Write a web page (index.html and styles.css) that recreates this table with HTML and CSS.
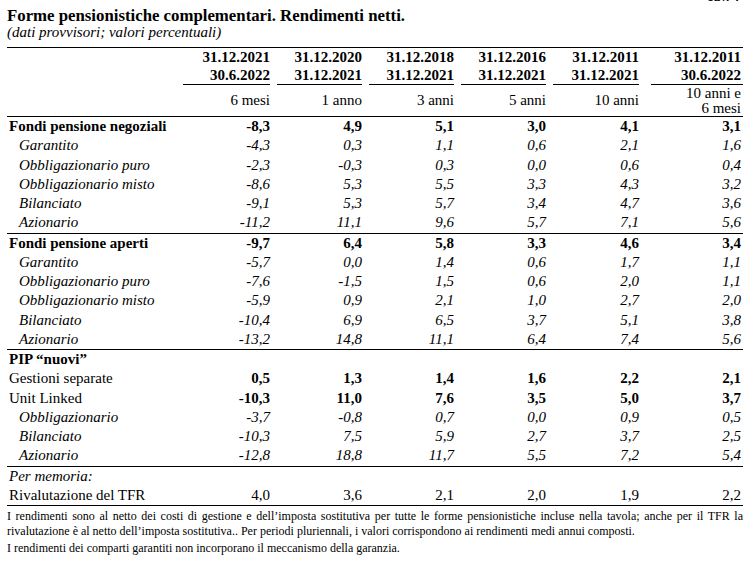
FILE: index.html
```html
<!DOCTYPE html>
<html lang="it">
<head>
<meta charset="utf-8">
<title>Forme pensionistiche complementari</title>
<link rel="stylesheet" href="styles.css">
</head>
<body>
<div class="page">
  <div class="tav">Tav. 4</div>
  <h1 class="title">Forme pensionistiche complementari. Rendimenti netti.</h1>
  <div class="subtitle">(dati provvisori; valori percentuali)</div>

  <div class="table">
    <div class="row dates">
      <div class="lab"></div>
      <div class="c"><span class="ul">31.12.2021<br>30.6.2022</span></div>
      <div class="c"><span class="ul">31.12.2020<br>31.12.2021</span></div>
      <div class="c"><span class="ul">31.12.2018<br>31.12.2021</span></div>
      <div class="c"><span class="ul">31.12.2016<br>31.12.2021</span></div>
      <div class="c"><span class="ul">31.12.2011<br>31.12.2021</span></div>
      <div class="c last"><span class="ul">31.12.2011<br>30.6.2022</span></div>
    </div>
    <div class="row periods">
      <div class="lab"></div>
      <div class="c">6 mesi</div>
      <div class="c">1 anno</div>
      <div class="c">3 anni</div>
      <div class="c">5 anni</div>
      <div class="c">10 anni</div>
      <div class="c last">10 anni e<br>6 mesi</div>
    </div>

    <div class="section">
      <div class="row b"><div class="lab">Fondi pensione negoziali</div><div class="c">-8,3</div><div class="c">4,9</div><div class="c">5,1</div><div class="c">3,0</div><div class="c">4,1</div><div class="c last">3,1</div></div>
      <div class="row i"><div class="lab">Garantito</div><div class="c">-4,3</div><div class="c">0,3</div><div class="c">1,1</div><div class="c">0,6</div><div class="c">2,1</div><div class="c last">1,6</div></div>
      <div class="row i"><div class="lab">Obbligazionario puro</div><div class="c">-2,3</div><div class="c">-0,3</div><div class="c">0,3</div><div class="c">0,0</div><div class="c">0,6</div><div class="c last">0,4</div></div>
      <div class="row i"><div class="lab">Obbligazionario misto</div><div class="c">-8,6</div><div class="c">5,3</div><div class="c">5,5</div><div class="c">3,3</div><div class="c">4,3</div><div class="c last">3,2</div></div>
      <div class="row i"><div class="lab">Bilanciato</div><div class="c">-9,1</div><div class="c">5,3</div><div class="c">5,7</div><div class="c">3,4</div><div class="c">4,7</div><div class="c last">3,6</div></div>
      <div class="row i"><div class="lab">Azionario</div><div class="c">-11,2</div><div class="c">11,1</div><div class="c">9,6</div><div class="c">5,7</div><div class="c">7,1</div><div class="c last">5,6</div></div>
    </div>

    <div class="section">
      <div class="row b"><div class="lab">Fondi pensione aperti</div><div class="c">-9,7</div><div class="c">6,4</div><div class="c">5,8</div><div class="c">3,3</div><div class="c">4,6</div><div class="c last">3,4</div></div>
      <div class="row i"><div class="lab">Garantito</div><div class="c">-5,7</div><div class="c">0,0</div><div class="c">1,4</div><div class="c">0,6</div><div class="c">1,7</div><div class="c last">1,1</div></div>
      <div class="row i"><div class="lab">Obbligazionario puro</div><div class="c">-7,6</div><div class="c">-1,5</div><div class="c">1,5</div><div class="c">0,6</div><div class="c">2,0</div><div class="c last">1,1</div></div>
      <div class="row i"><div class="lab">Obbligazionario misto</div><div class="c">-5,9</div><div class="c">0,9</div><div class="c">2,1</div><div class="c">1,0</div><div class="c">2,7</div><div class="c last">2,0</div></div>
      <div class="row i"><div class="lab">Bilanciato</div><div class="c">-10,4</div><div class="c">6,9</div><div class="c">6,5</div><div class="c">3,7</div><div class="c">5,1</div><div class="c last">3,8</div></div>
      <div class="row i"><div class="lab">Azionario</div><div class="c">-13,2</div><div class="c">14,8</div><div class="c">11,1</div><div class="c">6,4</div><div class="c">7,4</div><div class="c last">5,6</div></div>
    </div>

    <div class="section">
      <div class="row b"><div class="lab">PIP “nuovi”</div><div class="c"></div><div class="c"></div><div class="c"></div><div class="c"></div><div class="c"></div><div class="c last"></div></div>
      <div class="row b"><div class="lab reg">Gestioni separate</div><div class="c">0,5</div><div class="c">1,3</div><div class="c">1,4</div><div class="c">1,6</div><div class="c">2,2</div><div class="c last">2,1</div></div>
      <div class="row b"><div class="lab reg">Unit Linked</div><div class="c">-10,3</div><div class="c">11,0</div><div class="c">7,6</div><div class="c">3,5</div><div class="c">5,0</div><div class="c last">3,7</div></div>
      <div class="row i"><div class="lab">Obbligazionario</div><div class="c">-3,7</div><div class="c">-0,8</div><div class="c">0,7</div><div class="c">0,0</div><div class="c">0,9</div><div class="c last">0,5</div></div>
      <div class="row i"><div class="lab">Bilanciato</div><div class="c">-10,3</div><div class="c">7,5</div><div class="c">5,9</div><div class="c">2,7</div><div class="c">3,7</div><div class="c last">2,5</div></div>
      <div class="row i"><div class="lab">Azionario</div><div class="c">-12,8</div><div class="c">18,8</div><div class="c">11,7</div><div class="c">5,5</div><div class="c">7,2</div><div class="c last">5,4</div></div>
    </div>

    <div class="section">
      <div class="row"><div class="lab memo">Per memoria:</div><div class="c"></div><div class="c"></div><div class="c"></div><div class="c"></div><div class="c"></div><div class="c last"></div></div>
      <div class="row"><div class="lab">Rivalutazione del TFR</div><div class="c">4,0</div><div class="c">3,6</div><div class="c">2,1</div><div class="c">2,0</div><div class="c">1,9</div><div class="c last">2,2</div></div>
    </div>
  </div>

  <div class="notes">
    <p><span class="jl">I rendimenti sono al netto dei costi di gestione e dell’imposta sostitutiva per tutte le forme pensionistiche incluse nella tavola; anche per il TFR la</span>rivalutazione è al netto dell’imposta sostitutiva.. Per periodi pluriennali, i valori corrispondono ai rendimenti medi annui composti.</p>
    <p>I rendimenti dei comparti garantiti non incorporano il meccanismo della garanzia.</p>
  </div>
</div>
</body>
</html>
```

FILE: styles.css
```css
html, body {
  margin: 0;
  padding: 0;
  background: #fff;
}

body {
  font-family: "Liberation Serif", "Times New Roman", serif;
  color: #000;
}

.page {
  width: 736px;
  padding: 0 7px;
}

.tav {
  margin-top: -11px;
  height: 15px;
  line-height: 15px;
  font-size: 13px;
  font-weight: bold;
  text-align: right;
  padding-right: 4px;
}

.title {
  margin: 3px 0 0 0;
  font-size: 16.8px;
  font-weight: bold;
  line-height: 18px;
}

.subtitle {
  margin-top: 0;
  font-size: 15px;
  font-style: italic;
  line-height: 14px;
}

.table {
  margin-top: 8px;
  border-top: 1px solid #000;
  font-size: 15px;
}

.row {
  display: grid;
  grid-template-columns: 174px 94px 92px 92px 92px 93px 99px;
  height: 19.25px;
  line-height: 19.25px;
}

.row > .c {
  text-align: right;
  padding-right: 5px;
  white-space: nowrap;
}

.row > .c.last {
  padding-right: 2px;
}

.lab {
  padding-left: 2px;
  white-space: nowrap;
}

.row.b {
  font-weight: bold;
}

.row.i {
  font-style: italic;
}

.row.i .lab {
  padding-left: 12px;
}

.lab.reg {
  font-weight: normal;
}

.lab.memo {
  font-style: italic;
}

.row.dates {
  height: auto;
  padding-top: 1px;
  line-height: 17.5px;
  font-weight: bold;
}

.ul {
  display: block;
  margin-left: 2px;
  border-bottom: 1px solid #000;
}

.row.dates .c.last {
  padding-right: 0;
}

.row.dates .c.last .ul {
  margin-left: 7px;
  padding-right: 2px;
}

.row.periods {
  height: 31px;
  line-height: 15px;
  align-items: center;
}

.section {
  border-top: 1px solid #000;
}

.section:last-child {
  border-bottom: 1px solid #000;
}

.notes {
  margin-top: 3px;
  font-size: 12px;
  line-height: 15px;
}

.notes p {
  margin: 0 0 2px 0;
  text-align: left;
}

.jl {
  display: block;
  text-align: justify;
  text-align-last: justify;
}
```
